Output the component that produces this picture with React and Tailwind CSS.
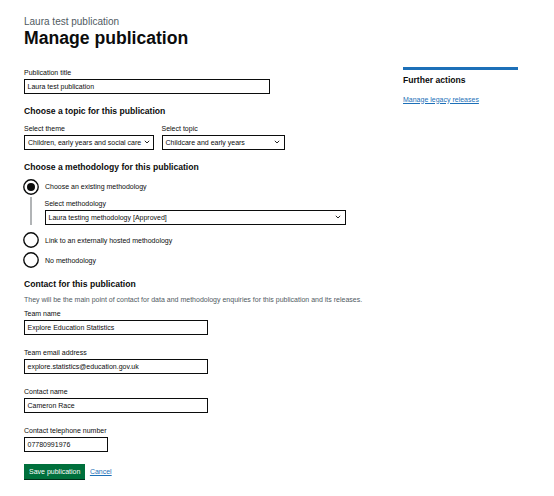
import React from 'react';

const Label = ({ children, className = '' }) => (
  <label className={`block text-[7px] leading-[9px] mb-[2px] ${className}`}>{children}</label>
);

const TextInput = ({ value, className = '' }) => (
  <div
    className={`h-[15px] border border-[#0b0c0c] bg-white pl-[2.5px] flex items-center text-[7px] leading-[9px] whitespace-nowrap overflow-hidden ${className}`}
  >
    {value}
  </div>
);

const Select = ({ value, className = '' }) => (
  <div
    className={`h-[15px] border border-[#0b0c0c] bg-white pl-[3px] pr-[4px] flex items-center justify-between text-[7px] leading-[9px] whitespace-nowrap ${className}`}
  >
    <span>{value}</span>
    <svg width="6" height="4" viewBox="0 0 6 4" className="shrink-0 ml-[3px]">
      <path d="M0.8 0.8 L3 3 L5.2 0.8" fill="none" stroke="#0b0c0c" strokeWidth="0.9" />
    </svg>
  </div>
);

const Radio = ({ checked = false, label }) => (
  <div className="flex items-center h-[16px]">
    <svg width="16" height="16" viewBox="0 0 16 16" className="shrink-0 ml-[-1px]">
      <circle cx="8" cy="8" r="7.2" fill="white" stroke="#0b0c0c" strokeWidth="1.4" />
      {checked && <circle cx="8" cy="8" r="4" fill="#0b0c0c" />}
    </svg>
    <span className="ml-[6px] text-[7px] leading-[9px]">{label}</span>
  </div>
);

const Heading = ({ children, className = '' }) => (
  <h2 className={`text-[8.6px] leading-[11px] font-bold ${className}`}>{children}</h2>
);

const Field = ({ label, value, inputClass, className = '' }) => (
  <div className={className}>
    <Label>{label}</Label>
    <TextInput value={value} className={inputClass} />
  </div>
);

export default function App() {
  return (
    <div className="min-h-[496px] bg-white text-[#0b0c0c] font-['Liberation_Sans',Arial,sans-serif] pl-[24px] pr-[36px] pt-[16px]">
      <span className="block text-[10px] leading-[12px] text-[#505a5f]">Laura test publication</span>
      <h1 className="text-[17.6px] leading-[20px] font-bold mb-[19px]">Manage publication</h1>

      <div className="flex justify-between">
        <form className="w-[370px] pt-[1px]">
          <Field label="Publication title" value="Laura test publication" inputClass="w-[245.5px]" />

          <Heading className="mt-[12px]">Choose a topic for this publication</Heading>
          <div className="flex gap-[8px] mt-[6.5px]">
            <div>
              <Label>Select theme</Label>
              <Select value="Children, early years and social care" className="w-[129.5px]" />
            </div>
            <div>
              <Label>Select topic</Label>
              <Select value="Childcare and early years" className="w-[123px]" />
            </div>
          </div>

          <Heading className="mt-[12.5px]">Choose a methodology for this publication</Heading>
          <div className="mt-[5.5px]">
            <Radio checked label="Choose an existing methodology" />
            <div className="mt-[2.5px] ml-[6px] border-l-2 border-[#b1b4b6] pl-[12.5px] pt-[1.5px] pb-[0.5px]">
              <Label>Select methodology</Label>
              <Select value="Laura testing methodology [Approved]" className="w-[301px]" />
            </div>
            <div className="mt-[7px]">
              <Radio label="Link to an externally hosted methodology" />
            </div>
            <div className="mt-[4px]">
              <Radio label="No methodology" />
            </div>
          </div>

          <Heading className="mt-[11px]">Contact for this publication</Heading>
          <p className="mt-[4.5px] text-[7px] leading-[9px] text-[#505a5f] whitespace-nowrap">
            They will be the main point of contact for data and methodology enquiries for this publication and its releases.
          </p>

          <Field className="mt-[5.5px]" label="Team name" value="Explore Education Statistics" inputClass="w-[183.5px]" />
          <Field className="mt-[13px]" label="Team email address" value="explore.statistics@education.gov.uk" inputClass="w-[183.5px]" />
          <Field className="mt-[13px]" label="Contact name" value="Cameron Race" inputClass="w-[183.5px]" />
          <Field className="mt-[13px]" label="Contact telephone number" value="07780991976" inputClass="w-[84px]" />

          <div className="mt-[12px] flex items-center gap-[4.5px]">
            <button
              type="button"
              className="h-[15px] px-[5px] bg-[#00703c] text-white text-[7px] leading-[9px] shadow-[0_1px_0_#002d18]"
            >
              Save publication
            </button>
            <a href="#" className="text-[7px] leading-[9px] text-[#1d70b8] underline">
              Cancel
            </a>
          </div>
        </form>

        <aside className="w-[115px]">
          <div className="h-[3px] bg-[#1d70b8]" />
          <Heading className="mt-[5px]">Further actions</Heading>
          <a href="#" className="block mt-[8.5px] text-[7px] leading-[9px] text-[#1d70b8] underline">
            Manage legacy releases
          </a>
        </aside>
      </div>
    </div>
  );
}
